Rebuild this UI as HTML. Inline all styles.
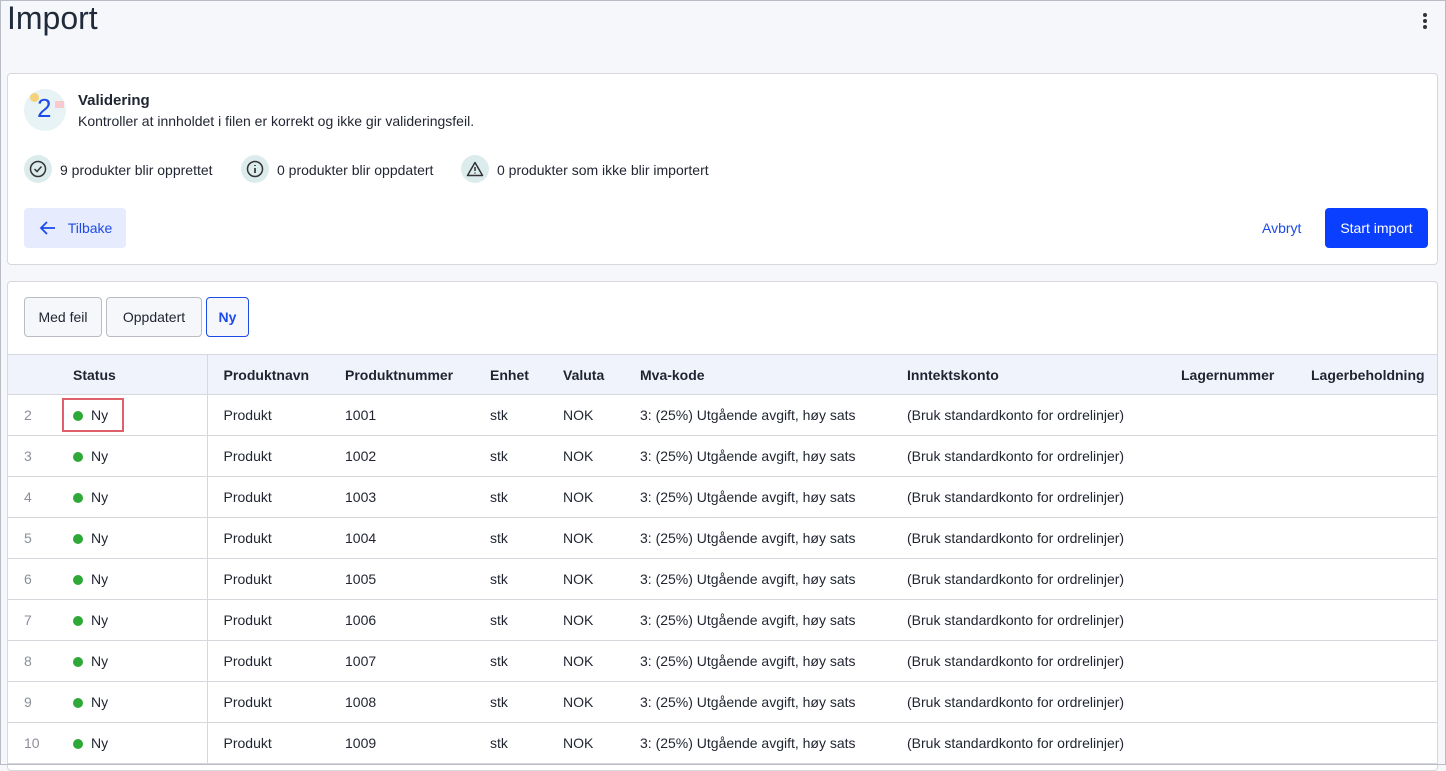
<!DOCTYPE html>
<html><head><meta charset="utf-8"><style>
*{box-sizing:border-box;margin:0;padding:0}
body{width:1446px;height:765px;overflow:hidden;background:#f6f7fb;font-family:"Liberation Sans",sans-serif;color:#1f2430;font-size:14px;position:relative}
.frame{position:absolute;left:0;top:0;width:1446px;height:765px;border:1px solid #b9bcc4;pointer-events:none;z-index:5}
.abs{position:absolute}
h1{position:absolute;left:7px;top:0px;font-size:32px;font-weight:400;color:#1f2a3a}
.card{position:absolute;left:7px;width:1431px;background:#fff;border:1px solid #d6d8de;border-radius:4px}
.ic{position:absolute;width:28px;height:28px;border-radius:50%;background:#dcecec}
.btn{position:absolute;border-radius:4px;display:flex;align-items:center;justify-content:center}
.tab{position:absolute;top:297px;height:40px;border:1px solid #b9bcc4;border-radius:4px;background:#f6f7fb;display:flex;align-items:center;justify-content:center;font-size:14px}
table{position:absolute;left:8px;top:354px;width:1429px;border-collapse:collapse}
th{background:#f0f3fc;height:40px;text-align:left;font-weight:700;font-size:14px;border-top:1px solid #d6d8de;border-bottom:1px solid #d6d8de}
td{height:41px;border-bottom:1px solid #d6d8de;font-size:14px}
.n{color:#8a8f99;padding-left:16px;width:49px}
.st{width:150px;border-right:1px solid #d6d8de;position:relative}
.dot{display:inline-block;width:10px;height:10px;border-radius:50%;background:#2ea836;margin:0 8px 0 16px;vertical-align:-1px}
.hl{position:absolute;left:5px;top:3px;width:62px;height:34px;border:2px solid #e0606a}
</style></head><body>
<div class="frame"></div>
<h1>Import</h1>
<div class="abs" style="left:1423px;top:13px;width:4px;height:4px;border-radius:50%;background:#333;box-shadow:0 6px 0 #333,0 12px 0 #333"></div>
<div class="card" style="top:73px;height:192px"></div>
<div class="abs" style="left:24px;top:89px;width:42px;height:42px;border-radius:50%;background:#e8f3f5"></div>
<div class="abs" style="left:30px;top:93px;width:9px;height:9px;border-radius:50%;background:#f5d27a"></div>
<div class="abs" style="left:55px;top:101px;width:9px;height:7px;background:#f8c9cf"></div>
<div class="abs" style="left:37px;top:93px;font-size:26px;color:#1c4be8">2</div>
<div class="abs" style="left:78px;top:92px;font-weight:700;font-size:15px">Validering</div>
<div class="abs" style="left:78px;top:113px;font-size:14px">Kontroller at innholdet i filen er korrekt og ikke gir valideringsfeil.</div>
<div class="ic" style="left:24px;top:155px"><svg width="28" height="28" viewBox="0 0 28 28"><circle cx="14" cy="14" r="7.5" fill="none" stroke="#333" stroke-width="1.5"/><path d="M10.5 14l2.5 2.5 4.5-5" fill="none" stroke="#333" stroke-width="1.5"/></svg></div>
<div class="abs" style="left:60px;top:162px">9 produkter blir opprettet</div>
<div class="ic" style="left:241px;top:155px"><svg width="28" height="28" viewBox="0 0 28 28"><circle cx="14" cy="14" r="7.5" fill="none" stroke="#333" stroke-width="1.5"/><path d="M14 13v5M14 10v1" stroke="#333" stroke-width="1.7"/></svg></div>
<div class="abs" style="left:277px;top:162px">0 produkter blir oppdatert</div>
<div class="ic" style="left:461px;top:155px"><svg width="28" height="28" viewBox="0 0 28 28"><path d="M14 7.5L21.5 20.5H6.5Z" fill="none" stroke="#333" stroke-width="1.5" stroke-linejoin="round"/><path d="M14 12v4M14 17.5v1" stroke="#333" stroke-width="1.5"/></svg></div>
<div class="abs" style="left:497px;top:162px">0 produkter som ikke blir importert</div>
<div class="btn" style="left:24px;top:208px;width:102px;height:40px;background:#e6ebfd;color:#1c4be8"><svg width="20" height="20" viewBox="0 0 20 20" style="margin-right:10px"><path d="M17 10H3M9 4l-6 6 6 6" fill="none" stroke="#1c4be8" stroke-width="1.8"/></svg>Tilbake</div>
<div class="abs" style="left:1262px;top:220px;color:#1c4be8">Avbryt</div>
<div class="btn" style="left:1325px;top:208px;width:103px;height:40px;background:#0a3fff;color:#fff">Start import</div>
<div class="card" style="top:281px;height:490px"></div>
<div class="tab" style="left:24px;width:78px">Med feil</div>
<div class="tab" style="left:106px;width:96px">Oppdatert</div>
<div class="tab" style="left:206px;width:43px;border-color:#1c4be8;color:#1c4be8;font-weight:700">Ny</div>
<table>
<tr><th class="n"></th><th class="st" style="padding-left:16px">Status</th><th style="padding-left:16px;width:138px">Produktnavn</th><th style="width:145px">Produktnummer</th><th style="width:73px">Enhet</th><th style="width:77px">Valuta</th><th style="width:267px">Mva-kode</th><th style="width:274px">Inntektskonto</th><th style="width:130px">Lagernummer</th><th>Lagerbeholdning</th></tr>
<tr><td class="n">2</td><td class="st"><div class="hl"></div><span class="dot"></span>Ny</td><td style="padding-left:16px">Produkt</td><td>1001</td><td>stk</td><td>NOK</td><td>3: (25%) Utgående avgift, høy sats</td><td>(Bruk standardkonto for ordrelinjer)</td><td></td><td></td></tr>
<tr><td class="n">3</td><td class="st"><span class="dot"></span>Ny</td><td style="padding-left:16px">Produkt</td><td>1002</td><td>stk</td><td>NOK</td><td>3: (25%) Utgående avgift, høy sats</td><td>(Bruk standardkonto for ordrelinjer)</td><td></td><td></td></tr>
<tr><td class="n">4</td><td class="st"><span class="dot"></span>Ny</td><td style="padding-left:16px">Produkt</td><td>1003</td><td>stk</td><td>NOK</td><td>3: (25%) Utgående avgift, høy sats</td><td>(Bruk standardkonto for ordrelinjer)</td><td></td><td></td></tr>
<tr><td class="n">5</td><td class="st"><span class="dot"></span>Ny</td><td style="padding-left:16px">Produkt</td><td>1004</td><td>stk</td><td>NOK</td><td>3: (25%) Utgående avgift, høy sats</td><td>(Bruk standardkonto for ordrelinjer)</td><td></td><td></td></tr>
<tr><td class="n">6</td><td class="st"><span class="dot"></span>Ny</td><td style="padding-left:16px">Produkt</td><td>1005</td><td>stk</td><td>NOK</td><td>3: (25%) Utgående avgift, høy sats</td><td>(Bruk standardkonto for ordrelinjer)</td><td></td><td></td></tr>
<tr><td class="n">7</td><td class="st"><span class="dot"></span>Ny</td><td style="padding-left:16px">Produkt</td><td>1006</td><td>stk</td><td>NOK</td><td>3: (25%) Utgående avgift, høy sats</td><td>(Bruk standardkonto for ordrelinjer)</td><td></td><td></td></tr>
<tr><td class="n">8</td><td class="st"><span class="dot"></span>Ny</td><td style="padding-left:16px">Produkt</td><td>1007</td><td>stk</td><td>NOK</td><td>3: (25%) Utgående avgift, høy sats</td><td>(Bruk standardkonto for ordrelinjer)</td><td></td><td></td></tr>
<tr><td class="n">9</td><td class="st"><span class="dot"></span>Ny</td><td style="padding-left:16px">Produkt</td><td>1008</td><td>stk</td><td>NOK</td><td>3: (25%) Utgående avgift, høy sats</td><td>(Bruk standardkonto for ordrelinjer)</td><td></td><td></td></tr>
<tr><td class="n">10</td><td class="st"><span class="dot"></span>Ny</td><td style="padding-left:16px">Produkt</td><td>1009</td><td>stk</td><td>NOK</td><td>3: (25%) Utgående avgift, høy sats</td><td>(Bruk standardkonto for ordrelinjer)</td><td></td><td></td></tr>
</table>
</body></html>
